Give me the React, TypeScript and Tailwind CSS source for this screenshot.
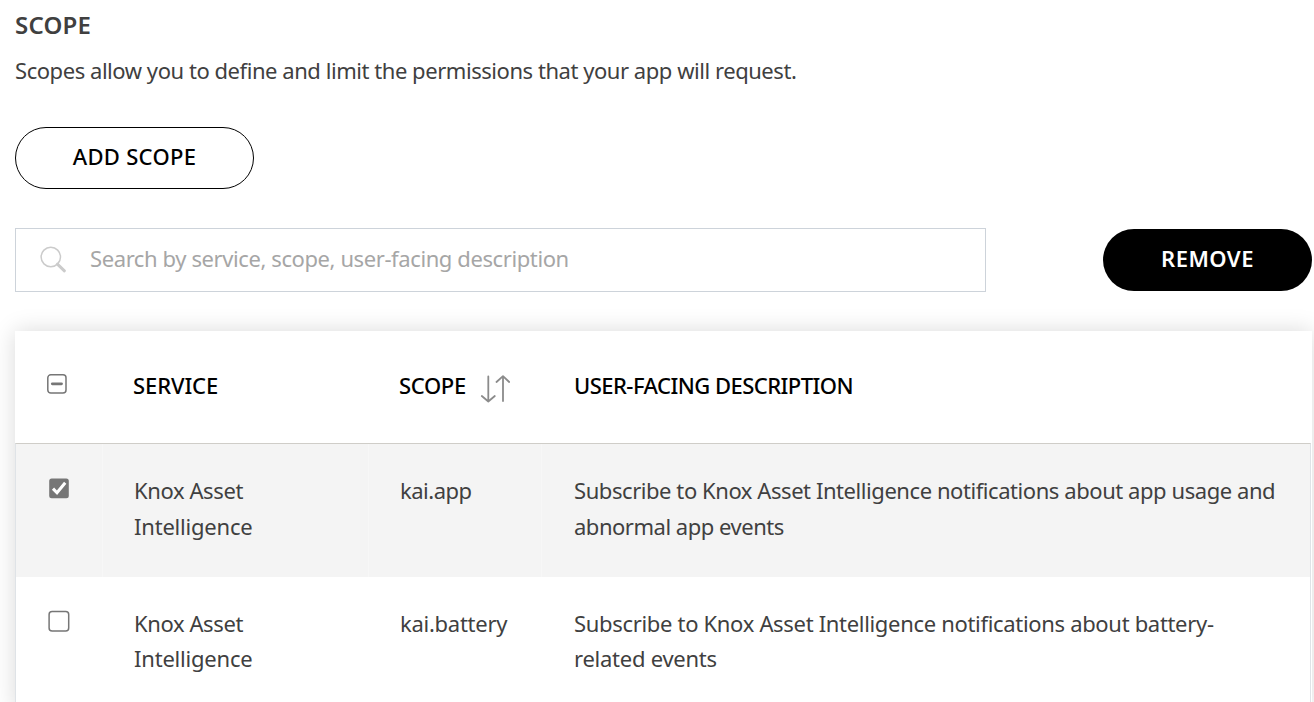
import React from "react";

function SearchIcon() {
  return (
    <svg className="ml-6 h-7 w-7 shrink-0" viewBox="0 0 28 28" fill="none" stroke="#cbcbcb">
      <circle cx="10.8" cy="11" r="9.7" strokeWidth="1.5" />
      <path d="M17.4 18.2L24.4 24.8" strokeWidth="3" strokeLinecap="round" />
    </svg>
  );
}

function SortIcon() {
  return (
    <svg className="h-7 w-[30px] shrink-0" viewBox="0 0 30 28" fill="none" stroke="#8b8b8b" strokeWidth="1.8" strokeLinecap="round" strokeLinejoin="round">
      <path d="M8.3 1.5V26.5M1.8 21L8.3 26.5L14.8 21" />
      <path d="M23 26V1.2M16.5 7L23 1.2L29.2 7" />
    </svg>
  );
}

function Checkbox({ state }: { state: "mixed" | "on" | "off" }) {
  return (
    <svg className="h-[22px] w-[22px]" viewBox="0 0 22 22" fill="none" role="checkbox" aria-checked={state === "mixed" ? "mixed" : state === "on"}>
      {state === "on" ? (
        <>
          <rect x="1.2" y="1.6" width="19.6" height="19.6" rx="2.5" fill="#767676" />
          <path d="M5 11.6L9 15.8L17.2 5.7" stroke="#fff" strokeWidth="3" />
        </>
      ) : state === "mixed" ? (
        <>
          <rect x="1.8" y="1.8" width="18.2" height="18.2" rx="3" fill="#fff" stroke="#767676" strokeWidth="1.5" />
          <path d="M6.3 10.8H15.5" stroke="#767676" strokeWidth="2.8" strokeLinecap="round" />
        </>
      ) : (
        <rect x="1.1" y="1.4" width="19.6" height="19.6" rx="3" fill="#fff" stroke="#767676" strokeWidth="1.5" />
      )}
    </svg>
  );
}

const rows = [
  {
    checked: true,
    scope: "kai.app",
    rowClass: "flex h-[133px] bg-[#f4f4f4] leading-[36px]",
    cellTop: "pt-[28px]",
    scopeClass: "tracking-[-0.5px]",
    lines: [
      { text: "Subscribe to Knox Asset Intelligence notifications about app usage and", className: "tracking-[-0.435px]" },
      { text: "abnormal app events", className: "tracking-[-0.48px]" },
    ],
  },
  {
    checked: false,
    scope: "kai.battery",
    rowClass: "flex h-[133px] bg-white leading-[35px]",
    cellTop: "pt-[29px]",
    scopeClass: "tracking-[-0.27px]",
    lines: [
      { text: "Subscribe to Knox Asset Intelligence notifications about battery-", className: "tracking-[-0.32px]" },
      { text: "related events", className: "tracking-[-0.25px]" },
    ],
  },
];

export default function App() {
  return (
    <main className="h-[702px] w-[1314px] overflow-hidden bg-white pl-[15px] font-['Noto_Sans',sans-serif] text-[22px] text-[#404040]">
      <h1 className="flex h-[50px] items-center text-[24px] font-semibold">
        <span className="tracking-[0.2px]">SCOPE</span>
      </h1>
      <p className="flex h-[40px] items-center whitespace-nowrap">
        <span className="tracking-[-0.45px]">Scopes allow you to define and limit the permissions that your app will request.</span>
      </p>
      <button className="mt-[37px] flex h-[62px] w-[239px] items-center justify-center rounded-full border-[1.5px] border-black pb-[3px] font-medium text-black">
        <span className="tracking-[0.3px]">ADD SCOPE</span>
      </button>
      <div className="mt-[39px] flex w-[1297px] items-start justify-between">
        <div className="flex h-[64px] w-[971px] items-center border border-[#cdd3da] text-[#a6a6a6]">
          <SearchIcon />
          <span className="mb-[3px] ml-[22px] tracking-[-0.4px]">Search by service, scope, user-facing description</span>
        </div>
        <button className="mt-px flex h-[62px] w-[209px] items-center justify-center rounded-full bg-black pb-[3px] font-semibold text-white">
          <span className="tracking-[0.45px]">REMOVE</span>
        </button>
      </div>
      <section className="mt-[39px] w-[1297px] bg-white shadow-[0_0_22px_rgba(0,0,0,0.15)]">
        <div className="flex h-[112px] w-full pt-[38px] font-medium text-black">
          <div className="w-[118px] pl-[31px] pt-[4px]"><Checkbox state="mixed" /></div>
          <div className="w-[266px]"><span className="tracking-[-0.1px]">SERVICE</span></div>
          <div className="flex w-[175px]"><span className="w-[67px] tracking-[-0.35px]">SCOPE</span><div className="ml-[14px] mt-[6px]"><SortIcon /></div></div>
          <div><span className="tracking-[-0.53px]">USER-FACING DESCRIPTION</span></div>
        </div>
        <div className="mr-px border-x border-t border-[#dfe3e7] border-t-[#cfcdc8]">
          {rows.map((row) => (
            <div key={row.scope} className={row.rowClass}>
              <div className="w-[87px] border-r border-white/30 pl-[32px] pt-[33px]"><Checkbox state={row.checked ? "on" : "off"} /></div>
              <div className={`w-[266px] border-r border-white/30 pl-[31px] ${row.cellTop}`}>
                <span className="tracking-[-0.4px]">Knox Asset</span><br /><span className="tracking-[-0.2px]">Intelligence</span>
              </div>
              <div className={`w-[173px] border-r border-white/30 pl-[31px] ${row.cellTop}`}><span className={row.scopeClass}>{row.scope}</span></div>
              <div className={`whitespace-nowrap pl-[32px] ${row.cellTop}`}>
                <span className={row.lines[0].className}>{row.lines[0].text}</span><br />
                <span className={row.lines[1].className}>{row.lines[1].text}</span>
              </div>
            </div>
          ))}
        </div>
      </section>
    </main>
  );
}
